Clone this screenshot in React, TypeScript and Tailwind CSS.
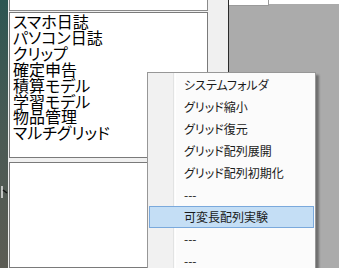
import React from "react";

const listItems = [
  "スマホ日誌",
  "パソコン日誌",
  "クリップ",
  "確定申告",
  "積算モデル",
  "学習モデル",
  "物品管理",
  "マルチグリッド",
];

const menuItems: { label: string; active?: boolean }[] = [
  { label: "システムフォルダ" },
  { label: "グリッド縮小" },
  { label: "グリッド復元" },
  { label: "グリッド配列展開" },
  { label: "グリッド配列初期化" },
  { label: "---" },
  { label: "可変長配列実験", active: true },
  { label: "---" },
  { label: "---" },
];

export default function App() {
  return (
    <div className="relative w-[339px] h-[268px] overflow-hidden flex bg-[#ababab] [font-family:'Noto_Sans_CJK_JP',sans-serif]">
      {/* desktop strip */}
      <div className="relative w-[8px] h-full bg-gradient-to-b from-[#2c5652] via-[#4a5a54] to-[#5c5c54]">
        <svg className="absolute left-[1px] top-[186px]" width="7" height="12" viewBox="0 0 7 12">
          <path d="M1 0 V12" stroke="#e8e8e8" strokeWidth="1.5" />
          <path d="M2 4 L6 7" stroke="#111" strokeWidth="1.5" />
        </svg>
      </div>

      {/* form area */}
      <div className="w-[221px] h-full bg-[#f0f0f0] flex flex-col pl-[1px] border-r border-[#2b2b2b]">
        <div className="w-[199px] h-[11px] bg-white border-x border-b border-[#8a8a8a]" />
        <div className="mt-[1px] w-[199px] h-[146px] bg-white border border-[#7a7a7a] pl-[3px] pt-[1px]">
          {listItems.map((t) => (
            <div
              key={t}
              className="text-[16px] leading-[15.9px] text-black [font-feature-settings:'palt'] whitespace-nowrap"
            >
              {t}
            </div>
          ))}
        </div>
        <div className="mt-[4px] w-[199px] flex-1 bg-white border border-[#7a7a7a]" />
      </div>

      {/* right gray area */}
      <div className="flex-1 flex items-start">
        <div className="w-[40px] h-[6px] bg-white border-r border-b border-[#9a9a9a]" />
        <div className="flex-1 h-[4px] bg-white" />
      </div>

      {/* context menu */}
      <div className="absolute left-[147px] top-[72px] w-[169px] h-[210px] bg-[#fbfbfb] border border-[#979797] pt-[1px] px-[1px] shadow-[3px_3px_2px_rgba(0,0,0,0.35)]">
        <div className="absolute left-0 top-0 bottom-0 w-[26px] bg-[#f1f1f1] border-r border-[#e2e3e3]" />
        <div className="absolute left-[27px] top-0 bottom-0 w-[1px] bg-white" />
        <div className="relative flex flex-col">
          {menuItems.map((m, i) => (
            <div
              key={i}
              className={
                m.active
                  ? "h-[22px] flex items-center pl-[34px] text-[12px] text-[#1a1a1a] bg-[#c4def5] border border-[#7aa9dc] [font-feature-settings:'palt'] whitespace-nowrap"
                  : "h-[22px] flex items-center pl-[35px] text-[12px] text-[#1a1a1a] [font-feature-settings:'palt'] whitespace-nowrap"
              }
            >
              {m.label}
            </div>
          ))}
        </div>
      </div>
    </div>
  );
}
